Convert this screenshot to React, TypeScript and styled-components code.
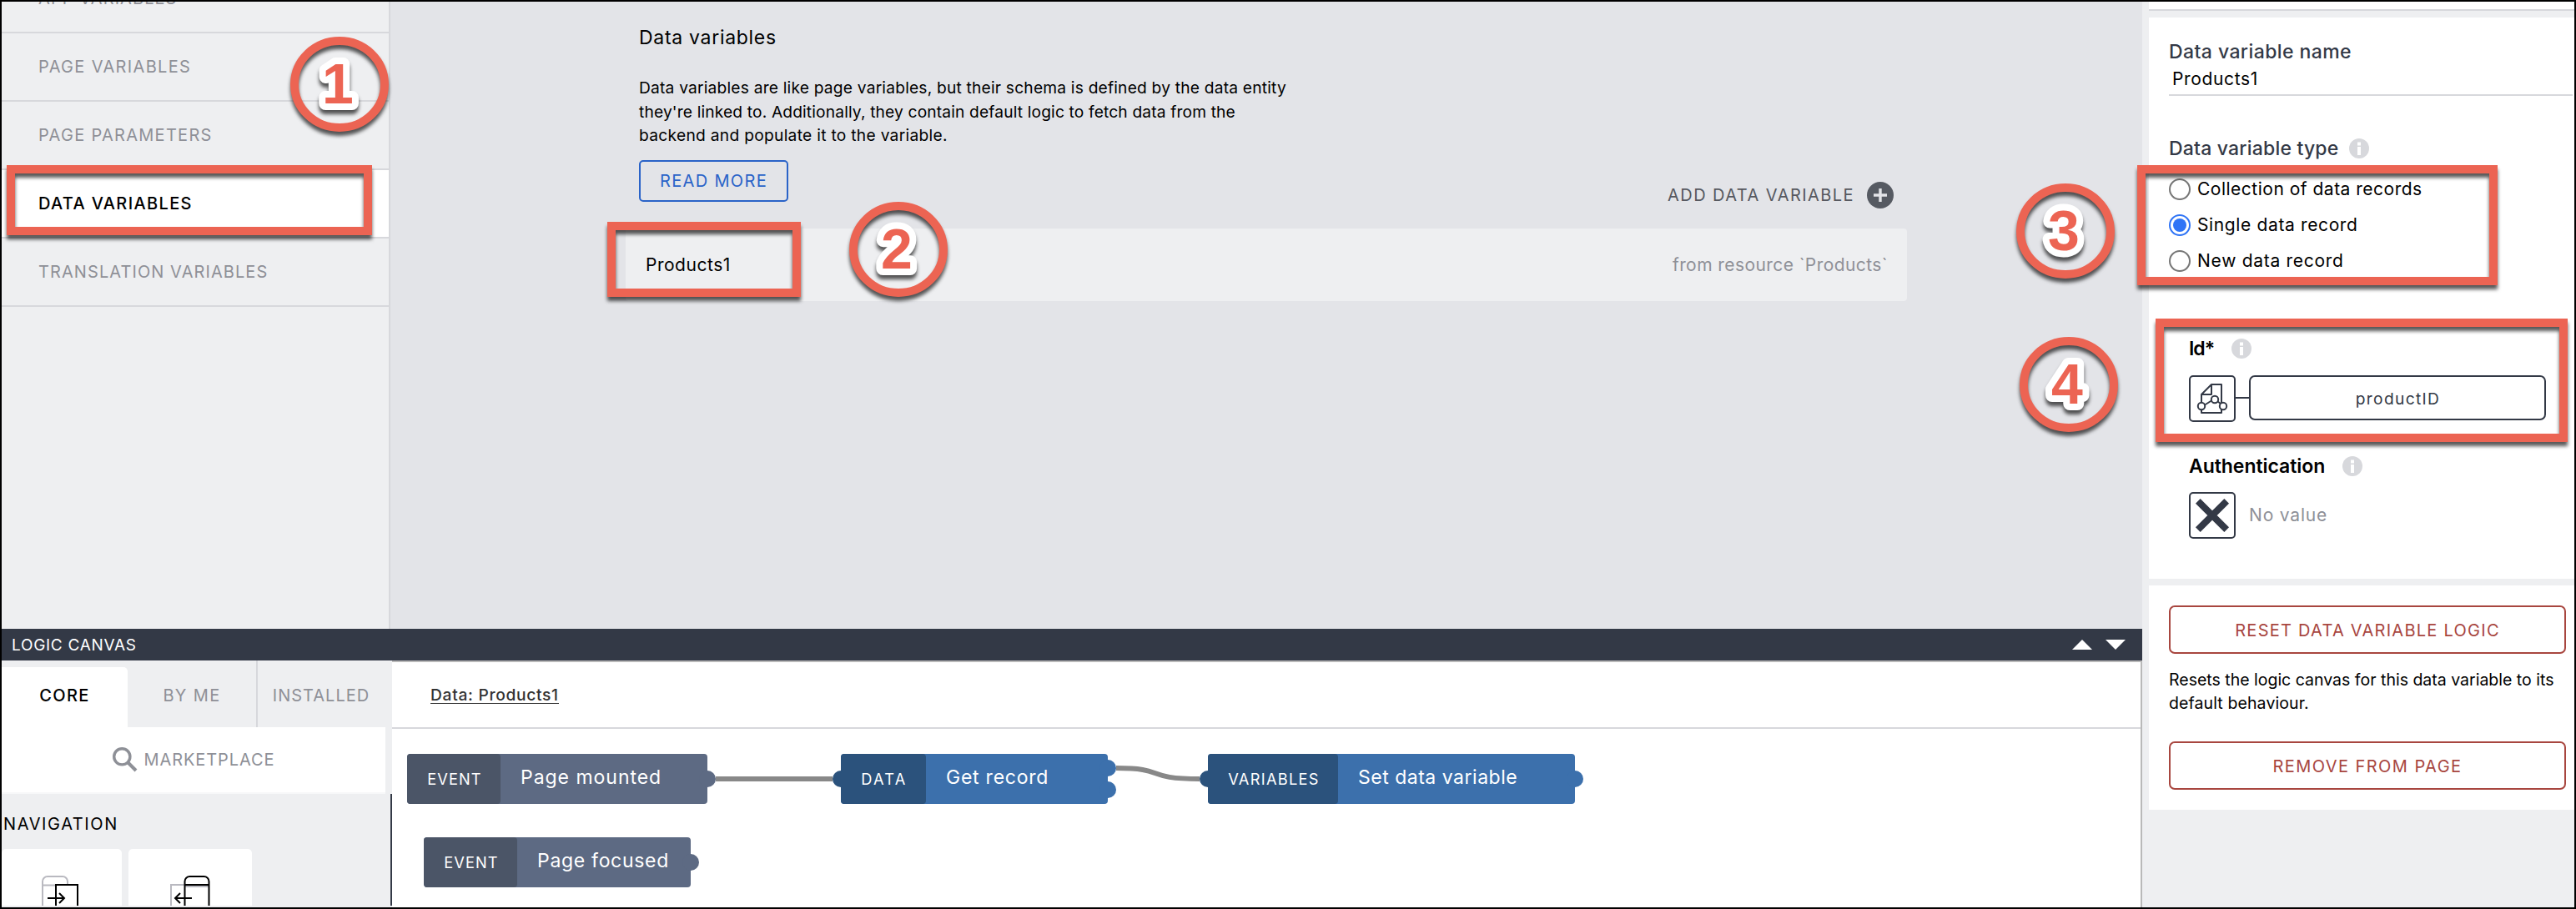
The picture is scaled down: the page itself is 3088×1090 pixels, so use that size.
import React from "react";
import styled, { createGlobalStyle } from "styled-components";

const C = {
  accent: "#ec6453",
  navy: "#333946",
  panel: "#eeeff1",
  work: "#e3e4e8",
  line: "#d7d8dc",
  muted: "#8e9097",
  danger: "#a8463f",
  link: "#2a63c8",
};

const GlobalStyle = createGlobalStyle`
  *, *::before, *::after { box-sizing: border-box; }
  body { margin: 0; font-family: Inter, "Liberation Sans", sans-serif; color: #000; }
  button { font-family: inherit; background: none; padding: 0; margin: 0; }
`;

const Screen = styled.div`
  position: relative;
  display: grid;
  grid-template-columns: 2566px 518px;
  width: 3088px;
  height: 1090px;
  border: 2px solid #000;
  background: ${C.panel};
  overflow: hidden;
`;

const Text = styled.span<{ size: number; ls?: number; weight?: number; color?: string }>`
  display: block;
  white-space: nowrap;
  font-size: ${(p) => p.size}px;
  letter-spacing: ${(p) => p.ls ?? 0}px;
  font-weight: ${(p) => p.weight ?? 400};
  color: ${(p) => p.color ?? "inherit"};
`;

/* ---------- main column ---------- */

const Main = styled.div`
  display: flex;
  flex-direction: column;
  min-width: 0;
  height: 1086px;
`;

const Upper = styled.div`
  display: flex;
  height: 752px;
  overflow: hidden;
`;

const Sidebar = styled.nav`
  width: 466px;
  border-right: 2px solid ${C.line};
  background: ${C.panel};
`;

const SideList = styled.div`
  display: flex;
  flex-direction: column;
  margin-top: -44px;
`;

const SideItem = styled.div<{ active?: boolean }>`
  display: flex;
  align-items: center;
  height: 82px;
  padding-left: 44px;
  border-bottom: 2px solid ${C.line};
  background: ${(p) => (p.active ? "#fff" : "transparent")};
  color: ${(p) => (p.active ? "#000" : C.muted)};
`;

const Workspace = styled.section`
  flex: 1;
  padding: 28px 282px 0;
  background: ${C.work};
`;

const WorkHead = styled.header`
  padding-left: 16px;
  line-height: 30px;
`;

const Intro = styled.div`
  margin-top: 31px;
  line-height: 28.5px;
`;

const WorkActions = styled.div`
  display: flex;
  justify-content: space-between;
  align-items: flex-start;
  height: 82px;
  margin: 15.5px 0 0 16px;
  padding-right: 16px;
`;

const LinkButton = styled.button`
  display: flex;
  align-items: center;
  justify-content: center;
  width: 179px;
  height: 50px;
  border: 2px solid ${C.link};
  border-radius: 5px;
`;

const AddVariable = styled.div`
  display: flex;
  align-items: center;
  gap: 15px;
  margin-top: 26px;
  color: #56585f;
`;

const VariableRow = styled.div`
  display: flex;
  align-items: center;
  justify-content: space-between;
  width: 1536px;
  height: 87px;
  padding: 0 23px 0 24px;
  border-radius: 4px;
  background: ${C.panel};
`;

const WorkColumn = styled.div`
  width: 1536px;
`;

/* ---------- logic canvas ---------- */

const CanvasBar = styled.div`
  display: flex;
  align-items: center;
  justify-content: space-between;
  height: 38px;
  padding: 0 20px 0 12px;
  background: ${C.navy};
  color: #fff;
`;

const Lower = styled.div`
  display: flex;
  height: 296px;
`;

const Library = styled.aside`
  display: flex;
  flex-direction: column;
  width: 468px;
  overflow: hidden;
`;

const Tabs = styled.div`
  display: flex;
  align-items: flex-end;
  height: 80px;
`;

const Tab = styled.div<{ w: number; active?: boolean; divided?: boolean }>`
  display: flex;
  align-items: center;
  justify-content: center;
  width: ${(p) => p.w}px;
  height: ${(p) => (p.active ? 72 : 80)}px;
  padding-bottom: ${(p) => (p.active ? 4 : 0)}px;
  padding-top: ${(p) => (p.active ? 0 : 4)}px;
  border-left: ${(p) => (p.divided ? `2px solid ${C.line}` : "none")};
  border-top-right-radius: ${(p) => (p.active ? 5 : 0)}px;
  background: ${(p) => (p.active ? "#fff" : "transparent")};
  color: ${(p) => (p.active ? "#000" : C.muted)};
`;

const Marketplace = styled.div`
  display: flex;
  align-items: center;
  justify-content: center;
  gap: 8px;
  width: 460px;
  height: 80px;
  border-bottom: 2px solid #f7f8f9;
  background: #fff;
  color: ${C.muted};
`;

const LibraryBody = styled.div`
  height: 134px;
  padding-top: 21px;
  border-right: 2px solid ${C.navy};
  line-height: 30px;
  overflow: hidden;
`;

const LibraryTitle = styled.div`
  padding-left: 2px;
`;

const TileRow = styled.div`
  display: flex;
  gap: 8px;
  margin-top: 15px;
`;

const Tile = styled.div<{ w: number }>`
  width: ${(p) => p.w}px;
  height: 120px;
  border-radius: 5px;
  background: #fff;
`;

const Board = styled.div`
  display: flex;
  flex-direction: column;
  flex: 1;
  border-top: 2px solid #b9b9b9;
  border-right: 2px solid #b9b9b9;
  background: #fff;
`;

const BoardHead = styled.div`
  display: flex;
  align-items: center;
  height: 80px;
  padding: 2px 0 0 46px;
  border-bottom: 2px solid ${C.line};
`;

const BoardLink = styled.div`
  color: #333;
  line-height: 19px;
  border-bottom: 1px solid #333;
`;

const Flow = styled.div`
  position: relative;
  flex: 1;
`;

const Wires = styled.svg`
  position: absolute;
  inset: 0;
`;

const NodeBox = styled.div<{ x: number; y: number; w: number; tone: string }>`
  position: absolute;
  display: flex;
  left: ${(p) => p.x}px;
  top: ${(p) => p.y}px;
  width: ${(p) => p.w}px;
  height: 60px;
  border-radius: 4px;
  background: ${(p) => p.tone};
  color: #fff;
`;

const NodeKind = styled.div<{ w: number; tone: string }>`
  position: relative;
  display: flex;
  align-items: center;
  justify-content: center;
  width: ${(p) => p.w}px;
  padding-left: 2px;
  border-radius: 4px;
  background: ${(p) => p.tone};
`;

const NodeTitle = styled.div`
  position: relative;
  padding: 0 0 3px 24px;
  line-height: 57px;
`;

const Port = styled.i<{ side: "left" | "right"; cy: number; tone: string }>`
  position: absolute;
  ${(p) => p.side}: -10px;
  top: ${(p) => p.cy - 10}px;
  width: 20px;
  height: 20px;
  border-radius: 50%;
  background: ${(p) => p.tone};
`;

/* ---------- properties panel ---------- */

const Properties = styled.aside`
  display: flex;
  flex-direction: column;
  gap: 8px;
  height: 1086px;
  padding-left: 8px;
  background: ${C.panel};
`;

const CardTail = styled.div`
  height: 11px;
  border-bottom: 2px solid ${C.line};
  background: #fff;
`;

const Card = styled.section<{ h: number; top: number }>`
  height: ${(p) => p.h}px;
  padding: ${(p) => p.top}px 2px 0 24px;
  background: #fff;
`;

const FieldLabel = styled.div<{ gap?: number; mt?: number }>`
  display: flex;
  align-items: center;
  gap: ${(p) => p.gap ?? 0}px;
  height: 30px;
  margin-top: ${(p) => p.mt ?? 0}px;
`;

const NameInput = styled.div`
  display: flex;
  align-items: center;
  height: 38px;
  padding: 0 0 1px 4px;
  border-bottom: 2px solid ${C.line};
`;

const RadioList = styled.div`
  margin-top: 12px;
`;

const RadioRow = styled.div`
  display: flex;
  align-items: center;
  gap: 8px;
  height: 43px;
`;

const Radio = styled.i<{ on?: boolean }>`
  display: flex;
  align-items: center;
  justify-content: center;
  width: 26px;
  height: 26px;
  border: 2px solid ${(p) => (p.on ? "#2f74f6" : "#767676")};
  border-radius: 50%;
  &::after {
    content: "";
    width: 16px;
    height: 16px;
    border-radius: 50%;
    background: ${(p) => (p.on ? "#2f74f6" : "transparent")};
  }
`;

const Params = styled.div`
  padding: 69px 0 0 24px;
`;

const Binding = styled.div<{ mt: number }>`
  display: flex;
  align-items: center;
  height: 56px;
  margin-top: ${(p) => p.mt}px;
`;

const BindingIcon = styled.div`
  width: 56px;
  height: 56px;
  border: 2px solid ${C.navy};
  border-radius: 5px;
  svg { display: block; margin: -2px; }
`;

const Connector = styled.div`
  width: 16px;
  height: 2px;
  margin-top: -2px;
  background: ${C.navy};
`;

const BindingValue = styled.div`
  display: flex;
  align-items: center;
  justify-content: center;
  align-self: flex-start;
  width: 356px;
  height: 54px;
  padding: 1px 0 0 1px;
  border: 2px solid ${C.navy};
  border-radius: 7px;
`;

const Empty = styled.div`
  padding: 0 0 1px 16px;
`;

const DangerButton = styled.button<{ mt?: number }>`
  display: flex;
  align-items: center;
  justify-content: center;
  width: 476px;
  height: 58px;
  margin-top: ${(p) => p.mt ?? 0}px;
  padding-top: 1px;
  border: 2px solid ${C.danger};
  border-radius: 7px;
`;

const Note = styled.div`
  margin-top: 17px;
  line-height: 28px;
`;

/* ---------- annotations ---------- */

const Highlight = styled.div<{ x: number; y: number; w: number; h: number }>`
  position: absolute;
  left: ${(p) => p.x - 2}px;
  top: ${(p) => p.y - 2}px;
  width: ${(p) => p.w}px;
  height: ${(p) => p.h}px;
  border: 10px solid ${C.accent};
  filter: drop-shadow(0 5px 2px rgba(0, 0, 0, 0.65));
`;

const Marker = styled.svg<{ x: number; y: number }>`
  position: absolute;
  left: ${(p) => p.x - 2}px;
  top: ${(p) => p.y - 2}px;
  overflow: visible;
  filter: drop-shadow(0 5px 2px rgba(0, 0, 0, 0.65));
  text {
    font: bold 68px "Liberation Sans", Arial, sans-serif;
    text-anchor: middle;
    fill: ${C.accent};
    stroke: #fff;
    stroke-width: 16px;
    stroke-linejoin: round;
    paint-order: stroke;
  }
`;

const Step = ({ n, x, y }: { n: number; x: number; y: number }) => (
  <Marker x={x} y={y} width={118} height={114}>
    <ellipse cx={59} cy={57} rx={54} ry={52} fill="none" stroke={C.accent} strokeWidth={10} />
    <text x={57} y={80}>{n}</text>
  </Marker>
);

const Info = () => (
  <svg width={24} height={24} viewBox="0 0 24 24">
    <circle cx={12} cy={12} r={12} fill={C.line} />
    <rect x={10} y={4.5} width={4} height={4} fill="#fff" />
    <rect x={10} y={10} width={4} height={10} fill="#fff" />
  </svg>
);

const PlusBadge = () => (
  <svg width={32} height={32} viewBox="0 0 32 32">
    <circle cx={16} cy={16} r={16} fill="#565a62" />
    <path d="M16 8v16M8 16h16" stroke={C.work} strokeWidth={3.4} />
  </svg>
);

const SearchGlyph = () => (
  <svg width={30} height={30} viewBox="0 0 30 30" fill="none" stroke={C.muted}>
    <circle cx={11.3} cy={11.3} r={9.6} strokeWidth={3.4} />
    <path d="M18.5 18.5L28 28" strokeWidth={4} />
  </svg>
);

const Arrows = () => (
  <svg width={64} height={12} viewBox="0 0 64 12" fill="#fff">
    <path d="M0 12L12 0L24 12z" />
    <path d="M40 0L52 12L64 0z" />
  </svg>
);

const DocumentGraph = () => (
  <svg width={56} height={56} viewBox="0 0 56 56" fill="none" stroke={C.navy} strokeWidth={2}>
    <path d="M15 33V23L27 11H39V33M15 23H27V11M15 41V45H39V41" strokeLinejoin="round" />
    <path d="M19 35.5L27 30.5M34.5 31.5L38 34" />
    <circle cx={15} cy={37} r={4.2} fill="#fff" />
    <circle cx={31} cy={29} r={4.2} fill="#fff" />
    <circle cx={41} cy={37} r={4.2} fill="#fff" />
  </svg>
);

const Cross = () => (
  <svg width={56} height={56} viewBox="0 0 56 56" stroke={C.navy} strokeWidth={8}>
    <path d="M10.8 10.8L45.2 45.2M45.2 10.8L10.8 45.2" />
  </svg>
);

const OpenPage = () => (
  <svg width={144} height={70} viewBox="0 0 144 70" fill="none" strokeWidth={2}>
    <path d="M49 70V39a6 6 0 0 1 6-6h18a6 6 0 0 1 6 6v4M49 43.5H65" stroke="#b9b9c0" />
    <path d="M65 70V43H91V70" stroke="#000" />
    <path d="M55 59H75M69 53L75 59L69 65" stroke="#000" />
  </svg>
);

const GoBack = () => (
  <svg width={148} height={70} viewBox="0 0 148 70" fill="none" strokeWidth={2}>
    <path d="M51 70V43H67M68 45H96" stroke="#b9b9c0" />
    <path d="M67.5 70V39a6 6 0 0 1 6-6h17a6 6 0 0 1 6 6V70M67 43H97" stroke="#000" />
    <path d="M76 59H56M62 53L56 59L62 65" stroke="#000" />
  </svg>
);

const sideItems = [
  { label: "APP VARIABLES", ls: 1.08 },
  { label: "PAGE VARIABLES", ls: 1.34 },
  { label: "PAGE PARAMETERS", ls: 1.28 },
  { label: "DATA VARIABLES", ls: 1.35, active: true },
  { label: "TRANSLATION VARIABLES", ls: 1.08 },
];

const radios = [
  { label: "Collection of data records", ls: 0.5 },
  { label: "Single data record", ls: 0.63, on: true },
  { label: "New data record", ls: 0.72 },
];

const SLATE = { dark: "#4b5567", light: "#5d6a83" };
const BLUE = { dark: "#2b527c", light: "#3c70ac" };

const nodes = [
  { kind: "EVENT", kls: 1.1, kw: 112, title: "Page mounted", ls: 0.97, x: 18, y: 30, w: 360, tone: SLATE, input: false, outputs: [30] },
  { kind: "DATA", kls: 2.3, kw: 102, title: "Get record", ls: 0.76, x: 538, y: 30, w: 320, tone: BLUE, input: true, outputs: [17, 43] },
  { kind: "VARIABLES", kls: 1.3, kw: 156, title: "Set data variable", ls: 0.51, x: 978, y: 30, w: 440, tone: BLUE, input: true, outputs: [30] },
  { kind: "EVENT", kls: 1.1, kw: 112, title: "Page focused", ls: 0.7, x: 38, y: 130, w: 320, tone: SLATE, input: false, outputs: [30] },
];

const highlights = [
  { x: 8, y: 198, w: 438, h: 84 },
  { x: 728, y: 266, w: 232, h: 90 },
  { x: 2562, y: 198, w: 432, h: 144 },
  { x: 2584, y: 382, w: 494, h: 148 },
];

export default function App() {
  return (
    <>
      <GlobalStyle />
      <Screen>
        <Main>
          <Upper>
            <Sidebar>
              <SideList>
                {sideItems.map((s) => (
                  <SideItem key={s.label} active={s.active}>
                    <Text size={20} ls={s.ls} weight={s.active ? 500 : 400}>{s.label}</Text>
                  </SideItem>
                ))}
              </SideList>
            </Sidebar>
            <Workspace>
              <WorkColumn>
                <WorkHead>
                  <Text size={23} ls={0.7}>Data variables</Text>
                  <Intro>
                    <Text size={19.2} ls={0.2}>Data variables are like page variables, but their schema is defined by the data entity</Text>
                    <Text size={19.2} ls={0.15}>they're linked to. Additionally, they contain default logic to fetch data from the</Text>
                    <Text size={19.2} ls={0.29}>backend and populate it to the variable.</Text>
                  </Intro>
                </WorkHead>
                <WorkActions>
                  <LinkButton>
                    <Text size={20} ls={1.35} color={C.link}>READ MORE</Text>
                  </LinkButton>
                  <AddVariable>
                    <Text size={20} ls={1.44}>ADD DATA VARIABLE</Text>
                    <PlusBadge />
                  </AddVariable>
                </WorkActions>
                <VariableRow>
                  <Text size={21} ls={0.52}>Products1</Text>
                  <Text size={21} ls={0.42} color={C.muted}>from resource `Products`</Text>
                </VariableRow>
              </WorkColumn>
            </Workspace>
          </Upper>

          <CanvasBar>
            <Text size={19} ls={0.7}>LOGIC CANVAS</Text>
            <Arrows />
          </CanvasBar>

          <Lower>
            <Library>
              <Tabs>
                <Tab w={151} active>
                  <Text size={20} ls={1.4} weight={500}>CORE</Text>
                </Tab>
                <Tab w={154}>
                  <Text size={20} ls={1.36}>BY ME</Text>
                </Tab>
                <Tab w={154} divided>
                  <Text size={20} ls={1}>INSTALLED</Text>
                </Tab>
              </Tabs>
              <Marketplace>
                <SearchGlyph />
                <Text size={20} ls={0.9}>MARKETPLACE</Text>
              </Marketplace>
              <LibraryBody>
                <LibraryTitle>
                  <Text size={20} ls={1.6}>NAVIGATION</Text>
                </LibraryTitle>
                <TileRow>
                  <Tile w={144}><OpenPage /></Tile>
                  <Tile w={148}><GoBack /></Tile>
                </TileRow>
              </LibraryBody>
            </Library>

            <Board>
              <BoardHead>
                <BoardLink>
                  <Text size={19.2} ls={0.7} weight={500}>Data: Products1</Text>
                </BoardLink>
              </BoardHead>
              <Flow>
                <Wires width={1500} height={214} fill="none" stroke="#888" strokeWidth={6}>
                  <path d="M388 60H528" />
                  <path d="M868 47C930 47 900 60 968 60" />
                </Wires>
                {nodes.map((n) => (
                  <NodeBox key={n.title} x={n.x} y={n.y} w={n.w} tone={n.tone.light}>
                    {n.input && <Port side="left" cy={30} tone={n.tone.dark} />}
                    {n.outputs.map((cy) => (
                      <Port key={cy} side="right" cy={cy} tone={n.tone.light} />
                    ))}
                    <NodeKind w={n.kw} tone={n.tone.dark}>
                      <Text size={18.2} ls={n.kls}>{n.kind}</Text>
                    </NodeKind>
                    <NodeTitle>
                      <Text size={23} ls={n.ls}>{n.title}</Text>
                    </NodeTitle>
                  </NodeBox>
                ))}
              </Flow>
            </Board>
          </Lower>
        </Main>

        <Properties>
          <CardTail />
          <Card h={673} top={26}>
            <FieldLabel>
              <Text size={23} ls={0.42} weight={500} color={C.navy}>Data variable name</Text>
            </FieldLabel>
            <NameInput>
              <Text size={21} ls={0.64}>Products1</Text>
            </NameInput>
            <FieldLabel mt={48} gap={13}>
              <Text size={23} ls={0.2} weight={500} color={C.navy}>Data variable type</Text>
              <Info />
            </FieldLabel>
            <RadioList>
              {radios.map((r) => (
                <RadioRow key={r.label}>
                  <Radio on={r.on} />
                  <Text size={21} ls={r.ls}>{r.label}</Text>
                </RadioRow>
              ))}
            </RadioList>
            <Params>
              <FieldLabel gap={21}>
                <Text size={23} ls={-1} weight={600}>Id*</Text>
                <Info />
              </FieldLabel>
              <Binding mt={17}>
                <BindingIcon><DocumentGraph /></BindingIcon>
                <Connector />
                <BindingValue>
                  <Text size={19.2} ls={1.35} color={C.navy}>productID</Text>
                </BindingValue>
              </Binding>
              <FieldLabel mt={38} gap={21}>
                <Text size={23} ls={-0.05} weight={600}>Authentication</Text>
                <Info />
              </FieldLabel>
              <Binding mt={16}>
                <BindingIcon><Cross /></BindingIcon>
                <Empty>
                  <Text size={21} ls={0.82} color={C.muted}>No value</Text>
                </Empty>
              </Binding>
            </Params>
          </Card>
          <Card h={269} top={24}>
            <DangerButton>
              <Text size={20} ls={1.26} color={C.danger}>RESET DATA VARIABLE LOGIC</Text>
            </DangerButton>
            <Note>
              <Text size={19.5}>Resets the logic canvas for this data variable to its</Text>
              <Text size={19.5} ls={0.11}>default behaviour.</Text>
            </Note>
            <DangerButton mt={32}>
              <Text size={20} ls={1.43} color={C.danger}>REMOVE FROM PAGE</Text>
            </DangerButton>
          </Card>
        </Properties>

        {highlights.map((h) => (
          <Highlight key={`${h.x}-${h.y}`} {...h} />
        ))}
        <Step n={1} x={348} y={44} />
        <Step n={2} x={1018} y={242} />
        <Step n={3} x={2417} y={220} />
        <Step n={4} x={2421} y={404} />
      </Screen>
    </>
  );
}
